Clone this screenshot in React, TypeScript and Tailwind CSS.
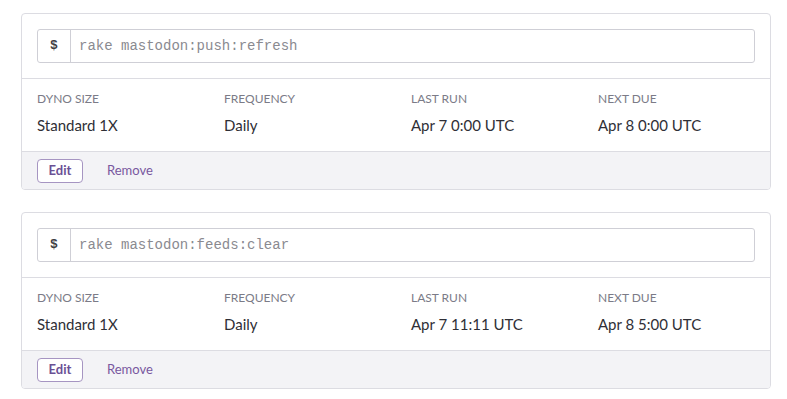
const jobs = [
  { cmd: "rake mastodon:push:refresh", last: "Apr 7 0:00 UTC", next: "Apr 8 0:00 UTC" },
  { cmd: "rake mastodon:feeds:clear", last: "Apr 7 11:11 UTC", next: "Apr 8 5:00 UTC" },
];

const Job = ({ cmd, last, next }: { cmd: string; last: string; next: string }) => {
  const cols = [
    ["DYNO SIZE", "Standard 1X"],
    ["FREQUENCY", "Daily"],
    ["LAST RUN", last],
    ["NEXT DUE", next],
  ];
  return (
    <div className="w-[750px] border border-[#dcdce2] rounded-[4px] bg-white overflow-hidden">
      <div className="px-[15px] py-[15px] border-b border-[#dcdce2]">
        <div className="flex h-[34px] border border-[#cfcfd6] rounded-[3px] overflow-hidden">
          <div className="w-[33px] flex items-center justify-center border-r border-[#cfcfd6] text-[13px] font-bold text-[#3f3f44] font-['Liberation_Mono',monospace]">
            $
          </div>
          <div className="flex items-center pl-2 text-[14px] text-[#8a8a90] font-['Liberation_Mono',monospace]">
            {cmd}
          </div>
        </div>
      </div>
      <div className="grid grid-cols-4 pt-[12px] pb-[16px]">
        {cols.map(([k, v]) => (
          <div key={k} className="pl-[15px]">
            <div className="text-[12px] leading-[16px] text-[#7b7b87]">{k}</div>
            <div className="mt-[8px] text-[15px] leading-[20px] text-[#2f2f36]">{v}</div>
          </div>
        ))}
      </div>
      <div className="flex items-center h-[38px] bg-[#f3f3f6] border-t border-[#dcdce2] px-[15px]">
        <button className="h-[24px] w-[46px] rounded-[4px] border border-[#a695c2] bg-white text-[13px] font-bold text-[#6a5094]">
          Edit
        </button>
        <span className="ml-6 text-[13px] text-[#79589f]">Remove</span>
      </div>
    </div>
  );
}

export default function App() {
  return (
    <div className="w-[787px] h-[399px] bg-white pl-[21px] pt-[13px] flex flex-col gap-[22px] font-['Lato','Liberation_Sans',sans-serif]">
      {jobs.map((j) => (
        <Job key={j.cmd} {...j} />
      ))}
    </div>
  );
}
